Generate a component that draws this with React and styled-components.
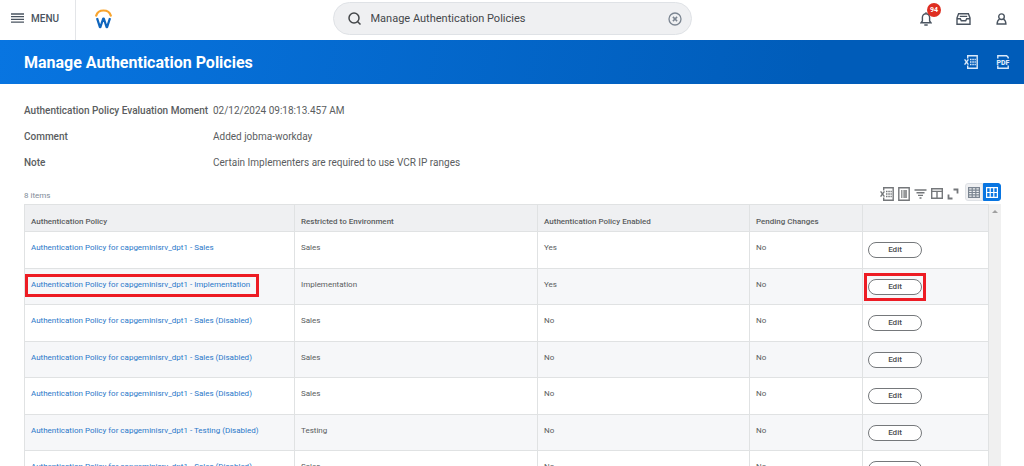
import React, { useState } from "react";
import styled, { createGlobalStyle } from "styled-components";

const GlobalStyle = createGlobalStyle`
  * {
    box-sizing: border-box;
  }

  body {
    margin: 0;
    background: #fff;
    color: #5a5d60;
    font-family: Roboto, "Liberation Sans", sans-serif;
    overflow: hidden;
  }

  button,
  input {
    font: inherit;
    color: inherit;
  }

  svg {
    display: block;
  }
`;

const Page = styled.div`
  display: flex;
  flex-direction: column;
  height: 100vh;
`;

const TopBar = styled.header`
  flex: none;
  display: grid;
  grid-template-columns: 1fr minmax(0, 359px) 1fr;
  align-items: center;
  height: 40px;
`;

const TopLeft = styled.div`
  display: flex;
  align-items: center;
  align-self: stretch;
`;

const IconButton = styled.button`
  position: relative;
  display: flex;
  padding: 0;
  border: none;
  background: none;
  color: ${(props) => props.color || "#4a5460"};
  cursor: pointer;
`;

const MenuButton = styled(IconButton)`
  align-items: center;
  align-self: stretch;
  gap: 7px;
  width: 76px;
  padding: 0 0 4px 11px;
  border-right: 1px solid #e3e5e8;
  font-size: 10px;
  font-weight: 500;
`;

const Logo = styled.a`
  margin: 0 0 3px 19px;
`;

const SearchBox = styled.label`
  display: flex;
  align-items: center;
  height: 33px;
  padding: 0 9px 0 14px;
  margin-top: -3px;
  border: 1px solid #dfe2e6;
  border-radius: 17px;
  background: #eff0f2;
  color: #44474a;
`;

const SearchInput = styled.input`
  flex: 1;
  min-width: 0;
  margin-left: 10px;
  padding: 0;
  border: none;
  outline: none;
  background: none;
  font-size: 11px;
`;

const TopRight = styled.div`
  display: flex;
  align-items: center;
  justify-content: flex-end;
  gap: 24px;
  padding: 0 16px 3px 0;
`;

const Badge = styled.span`
  position: absolute;
  top: -9px;
  left: 7px;
  width: 14px;
  height: 14px;
  border-radius: 50%;
  background: #de2e21;
  color: #fff;
  font-size: 7px;
  font-weight: 700;
  line-height: 14px;
  text-align: center;
`;

const TitleBar = styled.div`
  flex: none;
  display: flex;
  align-items: center;
  justify-content: space-between;
  height: 44px;
  padding: 0 14px 0 24px;
  background: linear-gradient(100deg, #0875e1 0%, #005cb9 80%);
`;

const Title = styled.h1`
  margin: 0;
  color: #fff;
  font-size: 16px;
  font-weight: 700;
`;

const TitleActions = styled.div`
  display: flex;
  gap: 18px;
`;

const Details = styled.dl`
  flex: none;
  display: grid;
  grid-template-columns: 189px 1fr;
  row-gap: 12px;
  margin: 0;
  padding: 20px 24px 0;
  font-size: 10px;
  line-height: 14px;
`;

const Term = styled.dt`
  font-weight: 500;
`;

const Value = styled.dd`
  margin: 0;
`;

const GridBar = styled.div`
  flex: none;
  display: flex;
  align-items: center;
  justify-content: space-between;
  padding: 13px 23px 0 24px;
`;

const ItemCount = styled.span`
  padding-top: 4px;
  color: #7f8b98;
  font-size: 8px;
`;

const Tools = styled.div`
  display: flex;
  align-items: center;
  gap: 4px;
`;

const ViewSwitch = styled.div`
  display: flex;
  margin: 0 0 3px 2px;
`;

const ViewButton = styled.button`
  display: flex;
  align-items: center;
  justify-content: center;
  width: 18px;
  height: 18px;
  padding: 0;
  border: 1px solid ${(props) => (props.$active ? "#0875e1" : "#dfe2e6")};
  border-radius: ${(props) => (props.$active ? "0 3px 3px 0" : "3px 0 0 3px")};
  background: ${(props) => (props.$active ? "#0875e1" : "#eff0f2")};
  color: ${(props) => (props.$active ? "#fff" : "#7b8591")};
  cursor: pointer;
`;

const GridArea = styled.div`
  flex: 1;
  display: flex;
  min-height: 0;
  padding: 0 23px 0 24px;
  overflow: hidden;
`;

const Table = styled.table`
  flex: 1;
  align-self: flex-start;
  table-layout: fixed;
  border-collapse: collapse;
  font-size: 8px;
  line-height: 10px;
`;

const Col = styled.col`
  width: ${(props) => props.$width};
`;

const HeadCell = styled.th`
  height: 27px;
  padding: 8px 6px 0;
  border: 1px solid #e0e2e3;
  background: #eff0f2;
  font-weight: 500;
  text-align: left;
`;

const Row = styled.tr`
  height: 37px;

  &:nth-child(even) {
    height: 36px;
    background: #f6f7f9;
  }
`;

const Cell = styled.td`
  padding: 11px 6px 0;
  border: 1px solid #e0e2e3;
  vertical-align: top;
`;

const ActionCell = styled(Cell)`
  padding: 0 5px;
  vertical-align: middle;
`;

const Marked = styled.span`
  position: relative;
  display: inline-block;

  &::after {
    content: "";
    position: absolute;
    inset: ${(props) => props.$inset};
    border: 3px solid #ed1c24;
    pointer-events: none;
  }
`;

const PolicyLink = styled.a`
  color: #2b78c9;
  text-decoration: none;
`;

const EditButton = styled.button`
  display: block;
  width: 54px;
  height: 16px;
  padding: 0;
  border: 1px solid #75787b;
  border-radius: 8px;
  background: #fff;
  color: #4a4d50;
  font-size: 8px;
  font-weight: 500;
  line-height: 14px;
  cursor: pointer;
`;

const ScrollTrack = styled.div`
  flex: none;
  width: 12px;
  padding: 5px 3px;
  background: #f0f0f0;
  color: #a0a0a0;
`;

const policies = [
  { name: "Sales", env: "Sales", enabled: "Yes" },
  { name: "Implementation", env: "Implementation", enabled: "Yes", marked: true },
  { name: "Sales (Disabled)", env: "Sales", enabled: "No" },
  { name: "Sales (Disabled)", env: "Sales", enabled: "No" },
  { name: "Sales (Disabled)", env: "Sales", enabled: "No" },
  { name: "Testing (Disabled)", env: "Testing", enabled: "No" },
  { name: "Sales (Disabled)", env: "Sales", enabled: "No" },
  { name: "Sales (Disabled)", env: "Sales", enabled: "No" },
];

function Icon({ width = 14, height = 14, stroke = 1, children }) {
  return (
    <svg
      width={width}
      height={height}
      viewBox={`0 0 ${width} ${height}`}
      fill="none"
      stroke="currentColor"
      strokeWidth={stroke}
      aria-hidden="true"
    >
      {children}
    </svg>
  );
}

function ExcelIcon() {
  return (
    <Icon stroke={1.4}>
      <path d="M3.700 3.400V.8h9.500v12.400H3.700v-2.600" />
      <path d="M.6 4.400l3.800 5.200M4.400 4.400L.6 9.600" />
      <path d="M6 4.500h1.500M8.300 4.500h1.500M10.500 4.500h1.300M6 7h1.500M8.300 7h1.500M10.500 7h1.300M6 9.500h1.500M8.300 9.500h1.500M10.500 9.500h1.300" />
    </Icon>
  );
}

function PolicyRow({ policy }) {
  const link = (
    <PolicyLink href="#policy">
      Authentication Policy for capgeminisrv_dpt1 - {policy.name}
    </PolicyLink>
  );
  const button = <EditButton type="button">Edit</EditButton>;

  return (
    <Row>
      <Cell>{policy.marked ? <Marked $inset="-6px -9px -7px -6px">{link}</Marked> : link}</Cell>
      <Cell>{policy.env}</Cell>
      <Cell>{policy.enabled}</Cell>
      <Cell>No</Cell>
      <ActionCell>
        {policy.marked ? <Marked $inset="-6px -4px -6px -4px">{button}</Marked> : button}
      </ActionCell>
    </Row>
  );
}

export default function App() {
  const [query, setQuery] = useState("Manage Authentication Policies");

  return (
    <Page>
      <GlobalStyle />
      <TopBar>
        <TopLeft>
          <MenuButton type="button">
            <Icon width={13} height={10} stroke={1.3}>
              <path d="M0 1h13M0 3.700h13M0 6.400h13M0 9.100h13" />
            </Icon>
            MENU
          </MenuButton>
          <Logo href="#home" aria-label="Workday home">
            <svg width="17" height="20" viewBox="0 0 17 20" fill="none">
              <path d="M1.200 6.600C2.100 3.500 5 1.500 8.500 1.500s6.400 2 7.300 5.100" stroke="#f9a42d" strokeWidth="2.200" strokeLinecap="round" />
              <path
                d="M2 9.200l2.900 9h.5L8.200 9.500h.6l2.800 8.700h.5L15 9.200"
                stroke="#0f65bd"
                strokeWidth="2.200"
                strokeLinejoin="round"
              />
            </svg>
          </Logo>
        </TopLeft>
        <SearchBox>
          <Icon width={13} height={13} stroke={1.5}>
            <circle cx="6" cy="6" r="5" />
            <path d="M9.500 9.500l3 3" />
          </Icon>
          <SearchInput
            type="text"
            aria-label="Search"
            value={query}
            onChange={(e) => setQuery(e.target.value)}
          />
          <IconButton type="button" aria-label="Clear search" color="#7b8591" onClick={() => setQuery("")}>
            <Icon stroke={1.3}>
              <circle cx="7" cy="7" r="6" />
              <path d="M4.900 4.900l4.200 4.200M9.100 4.900L4.900 9.100" strokeWidth="1.500" />
            </Icon>
          </IconButton>
        </SearchBox>
        <TopRight>
          <IconButton type="button" aria-label="Notifications">
            <Icon width={12} height={14} stroke={1.4}>
              <path d="M2.400 9V5.300a3.600 3.600 0 0 1 7.200 0V9l1.400 1.800H1L2.400 9zM6 .3v1.600M4.300 13h3.400" />
            </Icon>
            <Badge>94</Badge>
          </IconButton>
          <IconButton type="button" aria-label="Inbox">
            <Icon width={15} height={12} stroke={1.4}>
              <path d="M1 5L2.600.8h9.800L14 5v6.200H1zM1 5.700h3.300l1 2h4.400l1-2H14M3.800 3.400h7.400" />
            </Icon>
          </IconButton>
          <IconButton type="button" aria-label="Profile">
            <Icon width={13} height={12} stroke={1.4}>
              <circle cx="6.500" cy="3.700" r="2.800" />
              <path d="M4.600 6.200C3 6.800 2.200 8.400 2.100 11h8.800c-.1-2.600-.9-4.200-2.500-4.800" />
            </Icon>
          </IconButton>
        </TopRight>
      </TopBar>

      <TitleBar>
        <Title>Manage Authentication Policies</Title>
        <TitleActions>
          <IconButton type="button" aria-label="Export to Excel" color="#dceafa">
            <ExcelIcon />
          </IconButton>
          <IconButton type="button" aria-label="View printable version" color="#dceafa">
            <Icon stroke={1.4}>
              <path d="M1.800 3.600V.8h8.800l1.600 1.600v1.200M1.800 10.600v2.600h10.400v-2.600" />
              <text x="7" y="9.600" textAnchor="middle" fontSize="7" fontWeight="900" fill="currentColor" stroke="none">
                PDF
              </text>
            </Icon>
          </IconButton>
        </TitleActions>
      </TitleBar>

      <Details>
        <Term>Authentication Policy Evaluation Moment</Term>
        <Value>02/12/2024 09:18:13.457 AM</Value>
        <Term>Comment</Term>
        <Value>Added jobma-workday</Value>
        <Term>Note</Term>
        <Value>Certain Implementers are required to use VCR IP ranges</Value>
      </Details>

      <GridBar>
        <ItemCount>8 items</ItemCount>
        <Tools>
          <IconButton type="button" aria-label="Export table" color="#74777a">
            <ExcelIcon />
          </IconButton>
          <IconButton type="button" aria-label="Worksheet" color="#74777a">
            <Icon width={12} stroke={1.4}>
              <path d="M.8.800h10.400v12.400H.8z" />
              <path d="M3 4h1.500M5.300 4H9M3 6h1.500M5.300 6H9M3 8h1.500M5.300 8H9M3 10h1.500M5.300 10H9" />
            </Icon>
          </IconButton>
          <IconButton type="button" aria-label="Filter" color="#74777a">
            <Icon width={13} height={10} stroke={1.4}>
              <path d="M.5 1h12M2.500 3.700h8M4 6.400h5M5.500 9h2" />
            </Icon>
          </IconButton>
          <IconButton type="button" aria-label="Columns" color="#74777a">
            <Icon width={12} height={11} stroke={1.4}>
              <path d="M.7.700h10.600v9.600H.7zM.7 3.400h10.600M6 3.400v7" />
            </Icon>
          </IconButton>
          <IconButton type="button" aria-label="Full screen" color="#74777a">
            <Icon width={12} height={12} stroke={1.8}>
              <path d="M6.500 1.500h4v4M5.500 10.500h-4v-4" />
            </Icon>
          </IconButton>
          <ViewSwitch>
            <ViewButton type="button" aria-label="Compact view">
              <Icon width={12} height={11} stroke={1.2}>
                <path d="M.6.600h10.800v9.800H.6zM.6 3.100h10.800M.6 5.500h10.800M.6 7.900h10.800M4.200.600v9.800M7.800.600v9.800" />
              </Icon>
            </ViewButton>
            <ViewButton type="button" aria-label="Comfortable view" $active>
              <Icon width={12} height={11} stroke={1.2}>
                <path d="M.6.600h10.800v9.800H.6zM.6 5.500h10.800M4.200.600v9.800M7.800.600v9.800" />
              </Icon>
            </ViewButton>
          </ViewSwitch>
        </Tools>
      </GridBar>

      <GridArea>
        <Table>
          <colgroup>
            <Col />
            <Col $width="243px" />
            <Col $width="212px" />
            <Col $width="113px" />
            <Col $width="126px" />
          </colgroup>
          <thead>
            <tr>
              <HeadCell>Authentication Policy</HeadCell>
              <HeadCell>Restricted to Environment</HeadCell>
              <HeadCell>Authentication Policy Enabled</HeadCell>
              <HeadCell>Pending Changes</HeadCell>
              <HeadCell aria-label="Actions" />
            </tr>
          </thead>
          <tbody>
            {policies.map((policy, i) => (
              <PolicyRow key={i} policy={policy} />
            ))}
          </tbody>
        </Table>
        <ScrollTrack>
          <svg width="6" height="4" viewBox="0 0 6 4" aria-hidden="true">
            <path d="M0 4l3-3 3 3z" fill="currentColor" />
          </svg>
        </ScrollTrack>
      </GridArea>
    </Page>
  );
}
